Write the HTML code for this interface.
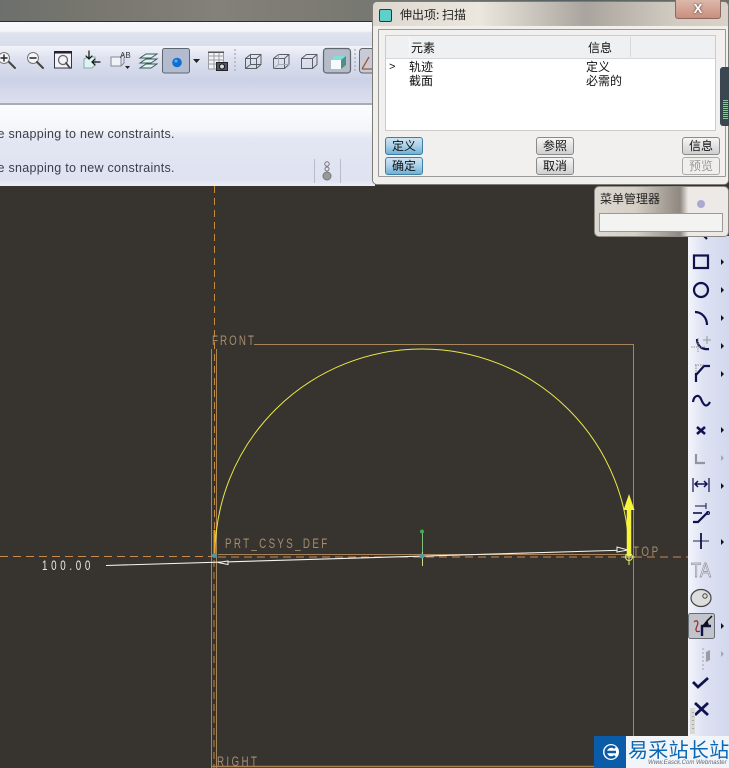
<!DOCTYPE html>
<html><head><meta charset="utf-8"><style>
html,body{margin:0;padding:0;background:#37332f}
#p{position:relative;width:729px;height:768px;overflow:hidden;background:#37332f;font-family:"Liberation Sans","Noto Sans CJK SC",sans-serif}
.a{position:absolute}
.t{position:absolute;white-space:nowrap}
.b{position:absolute;width:36px;height:16px;border:1px solid #8a8a8a;border-radius:3px;background:linear-gradient(#f6f6f6,#e2e2e2 50%,#cfcfcf);font-size:12px;line-height:16px;text-align:center;color:#111;font-family:"Noto Sans CJK SC",sans-serif}
.b.s{background:linear-gradient(#cfe4f2,#a9d0e8 50%,#6fb0d6);border-color:#3f7fa6}
.c{font-family:"Noto Sans CJK SC",sans-serif;font-size:12px;line-height:14px;color:#111}
svg text{font-family:"Liberation Sans",sans-serif}
</style></head><body><div id="p">
<div class="a" style="left:0;top:0;width:729px;height:21px;background:linear-gradient(90deg,#6d6f6c,#77766f 12%,#84807a 30%,#7b7a73 45%,#6f7371 62%,#556063 78%,#6e6f6b 100%)"></div>
<div class="a" style="left:0;top:21px;width:375px;height:1px;background:#2e2e2e"></div>
<div class="a" style="left:0;top:22px;width:375px;height:82px;background:linear-gradient(#f7f8fb 0,#f3f5f9 9px,#dfe3f0 11px,#d9deec 23px,#c4c8d2 23px,#f2f4f9 24px,#dee2f0 36px,#ccd2e6 58px,#dcdfee 81px)"></div>
<div class="a" style="left:0;top:103px;width:375px;height:2px;background:#a9acb3"></div>
<div class="a" style="left:0;top:105px;width:375px;height:81px;background:linear-gradient(#fbfcfe 0,#f4f6fa 24px,#e3e7f3 33px,#dfe3f1 75px,#eceef6 81px)"></div>
<div class="t" style="left:-9px;top:127px;font-size:12.5px;line-height:15px;letter-spacing:.28px;color:#3a3f4a">ve snapping to new constraints.</div>
<div class="t" style="left:-9px;top:161px;font-size:12.5px;line-height:15px;letter-spacing:.28px;color:#3a3f4a">ve snapping to new constraints.</div>

<svg class="a" style="left:0;top:0" width="729" height="768" viewBox="0 0 729 768" fill="none">
<!-- toolbar icons -->
<g stroke-linecap="round">
<circle cx="4" cy="58" r="5.500" fill="#f4f5f9" stroke="#777"/><path d="M1 58h6M4 55v6" stroke="#222" stroke-width="1.400"/><path d="M9 62l6 6" stroke="#444" stroke-width="2"/>
<circle cx="33" cy="58" r="5.500" fill="#f4f5f9" stroke="#777"/><path d="M30 58h6" stroke="#222" stroke-width="1.400"/><path d="M37 62l6 6" stroke="#444" stroke-width="2"/>
<rect x="54.500" y="52" width="17" height="16" fill="#f2f4f8" stroke="#334"/><rect x="54" y="51" width="18" height="2.500" fill="#223"/>
<circle cx="63" cy="60" r="4.500" stroke="#666" stroke-width="1.300"/><path d="M66 63l4 5" stroke="#444" stroke-width="1.800"/>
<path d="M84 59l4-2h7v8l-3 3h-8z" fill="#dff2f2" stroke="#8aa"/><path d="M89 51v8M86 56l3 3 3-3M100 62h-8M95 59l-3 3 3 3" stroke="#111" stroke-width="1.200"/>
<path d="M111 57h10v9h-10z" fill="#f0f3f5" stroke="#889"/><path d="M121 57l3-3M121 66l3-3v-5" stroke="#889"/>
<text x="120" y="58" font-size="8" fill="#333">AB</text><path d="M125 66h5l-2.500 3z" fill="#222"/>
<path d="M140 58l6-4h11l-6 4zM140 63l6-4h11l-6 4zM140 68l6-4h11l-6 4z" fill="#e0f4f2" stroke="#3a5656" stroke-width=".9"/>
</g>
<rect x="162.500" y="48.500" width="27" height="24.500" rx="2" fill="#b3bccf" stroke="#5f6670"/>
<circle cx="177" cy="62.500" r="4.800" fill="#0f6fd0"/><circle cx="176" cy="61" r="1.600" fill="#59a8ee"/>
<path d="M193 59h7l-3.500 4z" fill="#222"/>
<g stroke="#9a9da6"><rect x="208.500" y="52" width="15" height="17" fill="#f0f2f6"/><path d="M209 56h14M209 60h14M209 64h14M214 52v17M219 52v17"/></g>
<rect x="208" y="51.500" width="16" height="1.500" fill="#555"/>
<rect x="216.500" y="62.500" width="11" height="8" fill="#556" stroke="#222"/><circle cx="222" cy="66.500" r="2.500" fill="#cdd" stroke="#111"/>
<path d="M235 49v23" stroke="#aeb4c0" stroke-dasharray="2 2" stroke-width="1.500"/>
<g stroke="#5a5f66" stroke-width="1">
<path d="M245.500 58.500h11v10h-11zM245.500 58.500l5-4h10.500v10l-4.500 4M256.500 58.500l4.500-4M250.500 54.500v10h10.500M250.500 64.500l-5 4"/>
<path d="M273.500 58.500h11v10h-11zM273.500 58.500l5-4h10.500v10l-4.500 4M284.500 58.500l4.500-4"/><path d="M278.500 54.500v10h10.500M278.500 64.500l-5 4" stroke="#a8adb6"/>
<path d="M301.500 58.500h11v10h-11zM301.500 58.500l5-4h10.500v10l-4.500 4M312.500 58.500l4.500-4"/>
</g>
<rect x="323.500" y="48.500" width="27" height="24.500" rx="3" fill="#b5bbc8" stroke="#5f6670" stroke-width="1.200"/>
<path d="M331 60h10v9h-10z" fill="#f5fbfb"/><path d="M331 60l4-4h11l-5 4z" fill="#7fe0d8"/><path d="M341 60l5-4v9l-5 4z" fill="#4f8f88"/>
<path d="M355 49v23" stroke="#aeb4c0" stroke-dasharray="2 2" stroke-width="1.500"/>
<rect x="359.500" y="48.500" width="20" height="24.500" rx="3" fill="#c8cbd6" stroke="#5f6670"/><path d="M362 69l7-12M362 69h12" stroke="#9a5a3c" stroke-width="1.300"/>
<path d="M314.500 159v24M340.500 159v24" stroke="#b7bcc6"/>
<circle cx="327" cy="164" r="2.200" stroke="#777"/><circle cx="327" cy="169" r="2" stroke="#777"/><circle cx="327" cy="176" r="4" fill="#999" stroke="#777"/>

<!-- canvas lines -->
<path d="M214.500 186V548" stroke="#c98a3e" stroke-dasharray="7 5"/>
<path d="M211.500 349V768M216.500 349V768" stroke="#a6855c"/>
<path d="M214 560V768" stroke="#b98440" stroke-dasharray="7 5"/>
<path d="M254 344.500H633.500V768" stroke="#a6855c"/>
<path d="M212 766.500H690" stroke="#a6814f" stroke-width="1.500"/>
<path d="M0 556.500H215" stroke="#c98a4e" stroke-dasharray="8 5"/>
<path d="M218 554.500H629" stroke="#a6855c"/>
<path d="M218 557H690" stroke="#c98a4e" stroke-dasharray="8 5"/>
<!-- semicircle -->
<path d="M215 555A207 206 0 0 1 629 555" stroke="#e8e84a" stroke-width="1"/>
<path d="M214.500 530V553" stroke="#e8a52a" stroke-width="2"/>
<!-- dim -->
<path d="M106 565.500L628 550" stroke="#f4f2ec" stroke-width="1.100"/>
<path d="M218 562.500l10-1.500v3.500z" fill="#37332f" stroke="#f4f2ec"/>
<path d="M628 550l-11-3v5z" fill="#37332f" stroke="#f4f2ec"/>
<!-- centre -->
<path d="M422.500 532V566" stroke="#d8d48a"/><path d="M422.500 532V552" stroke="#7fc07f"/>
<circle cx="422" cy="531.500" r="2" fill="#3cae4c"/><circle cx="422" cy="556" r="2.500" fill="#4aa0a0"/>
<circle cx="214.500" cy="555.500" r="2.500" fill="#4a9aa8"/>
<path d="M629 556V506" stroke="#f7f43c" stroke-width="4.500"/><path d="M629 494l-5.500 16h11z" fill="#f7f43c"/>
<circle cx="629" cy="557" r="3.500" stroke="#e8e870"/><path d="M623 557h12M629 551v14" stroke="#e8e870"/>
<text transform="translate(212 345) scale(.7 1)" font-size="14" textLength="60" lengthAdjust="spacing" fill="#a58d70">FRONT</text>
<text transform="translate(225 548) scale(.7 1)" font-size="14" textLength="146" lengthAdjust="spacing" fill="#a58d70">PRT_CSYS_DEF</text>
<text transform="translate(633 556) scale(.7 1)" font-size="14" textLength="36" lengthAdjust="spacing" fill="#a58d70">TOP</text>
<text transform="translate(217 766) scale(.7 1)" font-size="14" textLength="57" lengthAdjust="spacing" fill="#a58d70">RIGHT</text>
<text transform="translate(42 570) scale(.7 1)" font-size="14" textLength="69" lengthAdjust="spacing" fill="#ece9e2">100.00</text>
</svg>

<!-- right toolbar -->
<div class="a" style="left:688px;top:236px;width:41px;height:500px;background:linear-gradient(90deg,#f3f5fb,#dde1f2 40%,#d4d8ee)"></div>
<svg class="a" style="left:688px;top:236px" width="41" height="500" viewBox="688 236 41 500" fill="none">
<g stroke="#10124e" stroke-width="2.200" fill="none">
<path d="M704 236l3 3"/>
<rect x="694" y="255.500" width="14" height="12.500"/>
<circle cx="701" cy="290" r="7"/>
<path d="M695 312c6 0 12 5 12 13"/>
<path d="M697 339c0 7 5 11 12 10"/>
<path d="M696 382v-9M696 375l8-9h6"/>
<path d="M693 402c1-7 6-8 8-3s5 10 9 3"/>
<path d="M697 427l8 7M705 427l-8 7" stroke-width="2.500"/>
<path d="M693 478v14M709 478v14" stroke-width="1.200"/><path d="M695 484h12M698 481l-3 3 3 3M704 481l3 3-3 3" stroke-width="1.500"/>
<path d="M693 522h5l10-10"/><path d="M693 513h9" stroke-width="1.600"/><path d="M695 506h11M706 503v6" stroke-width="1"/>
<path d="M693 541h16" stroke="#6a7090" stroke-width="1.600"/><path d="M701 533v16" stroke-width="1.800"/>
<path d="M693 682l5 5 10-9" stroke-width="2.800"/>
<path d="M695 703l13 12M708 703l-13 12" stroke-width="2.800"/>
</g>
<path d="M703 340h8M707 336v8" stroke="#888" stroke-width=".8"/>
<path d="M691 347h14M698 338v15" stroke="#999" stroke-dasharray="1.500 1"/>
<path d="M695 365h9M696 365v8" stroke="#888" stroke-dasharray="1.500 1"/>
<circle cx="708" cy="513" r="1.500" stroke="#10124e"/>
<path d="M696 454v9h9" stroke="#92949e" stroke-width="2.200"/>
<text x="691" y="577" font-size="20" textLength="20" lengthAdjust="spacingAndGlyphs" fill="#e4e6ee" stroke="#8b8e98" stroke-width=".7">TA</text>
<ellipse cx="701" cy="598" rx="10" ry="8.500" fill="#ddd" stroke="#444" stroke-width="1.200"/><circle cx="705" cy="596" r="2.200" stroke="#444"/>
<rect x="688.500" y="613.500" width="26" height="25" rx="2" fill="#c2c4cc" stroke="#6a6c74"/>
<path d="M694 622c3-3 5 0 3 4s-1 7 3 5" stroke="#a02020" stroke-width="1.200"/>
<path d="M702 636v-10h9" stroke="#10124e" stroke-width="2.400"/><path d="M712 616l-5 5M703 626l5-1-1-4z" stroke="#111" fill="#111" stroke-width="1.500"/>
<path d="M703 648v24" stroke="#a4a6ae" stroke-dasharray="2 2"/><path d="M706 652l4-2v10l-4 2z" fill="#9a9ca4"/>
<g fill="#111"><path d="M721 287l3 3-3 3zM721 315l3 3-3 3zM721 259l3 3-3 3zM721 343l3 3-3 3zM721 371l3 3-3 3zM721 427l3 3-3 3zM721 483l3 3-3 3zM721 539l3 3-3 3zM721 623l3 3-3 3z"/></g>
<g fill="#a6a8b0"><path d="M721 455l3 3-3 3zM721 651l3 3-3 3z"/></g>
<path d="M690 708h5v26h-5z" fill="#d8d8d4"/><path d="M693 712v20" stroke="#777" stroke-dasharray="1 3"/>
</svg>

<!-- dialog -->
<div class="a" style="left:372px;top:1px;width:355px;height:182px;border:1px solid #7c7d78;border-radius:5px;background:linear-gradient(90deg,#dcd8cf,#ece7de 30%,#a9a49d 60%,#d2cbc2 85%,#dad2c8);overflow:hidden">
<div class="a" style="left:0;top:24px;width:355px;height:158px;background:#f0efec"></div>
</div>
<div class="a" style="left:379px;top:9px;width:11px;height:11px;background:#5ecfcb;border:1px solid #334;border-radius:2px"></div>
<div class="t" style="left:400px;top:6px;font-size:12px;line-height:17px;color:#222;font-family:'Noto Sans CJK SC',sans-serif">伸出项: 扫描</div>
<div class="a" style="left:675px;top:0;width:46px;height:19px;background:linear-gradient(#dcb8aa,#c98f7e);border:1px solid #8a6a60;border-top:0;border-radius:0 0 3px 3px;box-sizing:border-box;color:#fff;font:bold 13px/17px 'Liberation Sans',sans-serif;text-align:center;text-shadow:0 0 2px #333">X</div>
<div class="a" style="left:378px;top:29px;width:346px;height:146px;border:1px solid #999;background:#f1f0ee;border-radius:1px"></div>
<div class="a" style="left:385px;top:35px;width:329px;height:94px;border:1px solid #ccc;background:#fff"></div>
<div class="a" style="left:386px;top:36px;width:329px;height:22px;background:#eef0f1;border-bottom:1px solid #d5d7da"></div>
<div class="a" style="left:409px;top:37px;width:1px;height:20px;background:#fafafa"></div>
<div class="a" style="left:630px;top:37px;width:1px;height:20px;background:#d8d8d8"></div>
<div class="t c" style="left:411px;top:41px">元素</div>
<div class="t c" style="left:588px;top:41px">信息</div>
<div class="t c" style="left:389px;top:60px;font-family:'Liberation Sans',sans-serif;font-size:11px">&gt;</div>
<div class="t c" style="left:409px;top:60px">轨迹</div>
<div class="t c" style="left:586px;top:60px">定义</div>
<div class="t c" style="left:409px;top:74px">截面</div>
<div class="t c" style="left:586px;top:74px">必需的</div>
<div class="b s" style="left:385px;top:137px">定义</div>
<div class="b s" style="left:385px;top:157px">确定</div>
<div class="b" style="left:536px;top:137px">参照</div>
<div class="b" style="left:536px;top:157px">取消</div>
<div class="b" style="left:682px;top:137px">信息</div>
<div class="b" style="left:682px;top:157px;color:#999;background:#f0efec;border-color:#aaa">预览</div>
<div class="a" style="left:720px;top:67px;width:9px;height:59px;background:#3a4750;border-radius:3px 0 0 3px"></div>
<div class="a" style="left:723px;top:100px;width:5px;height:20px;background:repeating-linear-gradient(#8fc59a 0 1px,#3a4750 1px 2px)"></div>

<!-- menu manager -->
<div class="a" style="left:594px;top:186px;width:133px;height:49px;border:1px solid #8e8a84;border-radius:5px;background:linear-gradient(90deg,#ddd8d0,#d5cfc6 30%,#8e8880 64%,#ece9e6 70%)"></div>
<div class="t" style="left:600px;top:190px;font-size:12px;line-height:17px;color:#222;font-family:'Noto Sans CJK SC',sans-serif">菜单管理器</div>
<div class="a" style="left:599px;top:213px;width:122px;height:17px;border:1px solid #999;background:#f3f3f2"></div>
<svg class="a" style="left:690px;top:196px" width="20" height="20"><circle cx="11" cy="8" r="4" fill="#aaa9cf"/></svg>

<!-- watermark -->
<div class="a" style="left:594px;top:736px;width:135px;height:32px;background:#f1f5fa"></div>
<div class="a" style="left:594px;top:736px;width:32px;height:32px;background:#0a5ca8"></div>
<svg class="a" style="left:600px;top:741px" width="22" height="22"><circle cx="11" cy="11" r="8" fill="#fff"/><path d="M6 11h10M15 7a5.500 5.500 0 1 0 0 8" stroke="#0a5ca8" stroke-width="2.500" fill="none"/></svg>
<div class="t" style="left:628px;top:737px;font-size:20px;line-height:24px;color:#0a67b3;font-family:'Noto Sans CJK SC',sans-serif;letter-spacing:.3px">易采站长站</div>
<div class="t" style="left:648px;top:760px;font-size:6px;line-height:7px;color:#667;font-style:italic">Www.Easck.Com Webmaster</div>
</div></body></html>
